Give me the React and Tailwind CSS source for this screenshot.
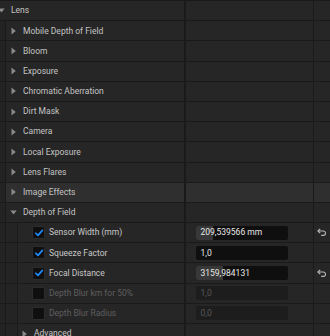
import React from 'react';

const font = { fontFamily: 'Roboto, "Noto Sans", sans-serif' };

function ArrowRight() {
    return (
        <svg width="5" height="8" viewBox="0 0 5 8" className="shrink-0">
            <path d="M0.5 0.5 L4.8 4 L0.5 7.5 Z" fill="#8a8a8a" />
        </svg>
    );
}

function ArrowDown() {
    return (
        <svg width="7" height="5" viewBox="0 0 7 5" className="shrink-0">
            <path d="M0.3 0.5 L6.7 0.5 L3.5 4.6 Z" fill="#8a8a8a" />
        </svg>
    );
}

function Check() {
    return (
        <svg width="10" height="10" viewBox="0 0 10 10">
            <path d="M1.8 5.2 L4 7.4 L8.4 2.4" stroke="#1f8bff" strokeWidth="1.6" fill="none" strokeLinecap="round" strokeLinejoin="round" />
        </svg>
    );
}

function Reset() {
    return (
        <svg width="10" height="9" viewBox="0 0 10 9">
            <path d="M3.2 0.8 L0.9 3 L3.2 5.2" stroke="#b8b8b8" strokeWidth="1.1" fill="none" strokeLinejoin="round" />
            <path d="M1 3 H6.3 A2.2 2.2 0 0 1 6.3 7.4 H4.2" stroke="#b8b8b8" strokeWidth="1.1" fill="none" />
        </svg>
    );
}

function Row({ children, value, reset, hover }) {
    return (
        <div className={`flex h-[20.2px] border-b border-[#1a1a1a] ${hover ? 'bg-[#2f2f2f]' : 'bg-[#262626]'}`}>
            <div className="flex w-[184px] items-center">{children}</div>
            <div className="w-[1.5px] bg-[#1a1a1a]"></div>
            <div className="flex w-[127px] items-center">{value}</div>
            <div className="w-[1.5px] bg-[#1a1a1a]"></div>
            <div className="flex flex-1 items-center justify-center">{reset && <Reset />}</div>
        </div>
    );
}

function Gutter({ level }) {
    return (
        <>
            <div className="h-full w-[6px] border-r border-[#1a1a1a] bg-[#232323]"></div>
            {level > 1 && <div className="h-full w-[12px] border-r border-[#1a1a1a] bg-[#242424]"></div>}
        </>
    );
}

function Label({ children, className = '' }) {
    return <span className={`text-[8.5px] leading-none ${className}`}>{children}</span>;
}

function Group({ label }) {
    return (
        <Row>
            <Gutter level={1} />
            <div className="ml-[5px] flex"><ArrowRight /></div>
            <Label className="ml-[7px] text-[#c4c4c4]">{label}</Label>
        </Row>
    );
}

function Input({ text, fill, disabled }) {
    return (
        <div className={`relative ml-[10px] flex h-[14px] w-[92px] items-center overflow-hidden rounded-[2px] ${disabled ? 'bg-[#1d1d1d]' : 'bg-[#0f0f0f]'}`}>
            {fill && <div className="absolute left-0 top-0 h-full bg-[#383838]" style={{ width: fill }}></div>}
            <Label className={`relative pl-[5px] ${disabled ? 'text-[#585858]' : 'text-[#e8e8e8]'}`}>{text}</Label>
        </div>
    );
}

function Prop({ label, value, fill, checked, reset }) {
    return (
        <Row value={<Input text={value} fill={fill} disabled={!checked} />} reset={reset}>
            <Gutter level={2} />
            <div className="ml-[14px] flex h-[13px] w-[13px] items-center justify-center rounded-[2px] border border-[#2c2c2c] bg-[#0f0f0f]">
                {checked && <Check />}
            </div>
            <Label className={`ml-[4px] ${checked ? 'text-[#c8c8c8]' : 'text-[#5e5e5e]'}`}>{label}</Label>
        </Row>
    );
}

export default function App() {
    const groups = ['Mobile Depth of Field', 'Bloom', 'Exposure', 'Chromatic Aberration', 'Dirt Mask', 'Camera', 'Local Exposure', 'Lens Flares'];

    return (
        <div className="h-[336px] w-[330px] overflow-hidden border-t border-[#1a1a1a] bg-[#242424]" style={font}>
            <Row>
                <div className="-ml-[2px] flex"><ArrowDown /></div>
                <Label className="ml-[6px] text-[#c4c4c4]">Lens</Label>
            </Row>
            {groups.map((g) => <Group key={g} label={g} />)}
            <Row hover>
                <Gutter level={1} />
                <div className="ml-[5px] flex"><ArrowRight /></div>
                <Label className="ml-[7px] text-[#c4c4c4]">Image Effects</Label>
            </Row>
            <Row>
                <Gutter level={1} />
                <div className="ml-[4px] flex"><ArrowDown /></div>
                <Label className="ml-[6px] text-[#c4c4c4]">Depth of Field</Label>
            </Row>
            <Prop label="Sensor Width (mm)" value="209,539566 mm" fill="17px" checked reset />
            <Prop label="Squeeze Factor" value="1,0" checked />
            <Prop label="Focal Distance" value="3159,984131" fill="27px" checked reset />
            <Prop label="Depth Blur km for 50%" value="1,0" />
            <Prop label="Depth Blur Radius" value="0,0" />
            <Row>
                <Gutter level={2} />
                <div className="ml-[4px] flex"><ArrowRight /></div>
                <Label className="ml-[7px] text-[#c4c4c4]">Advanced</Label>
            </Row>
        </div>
    );
}
